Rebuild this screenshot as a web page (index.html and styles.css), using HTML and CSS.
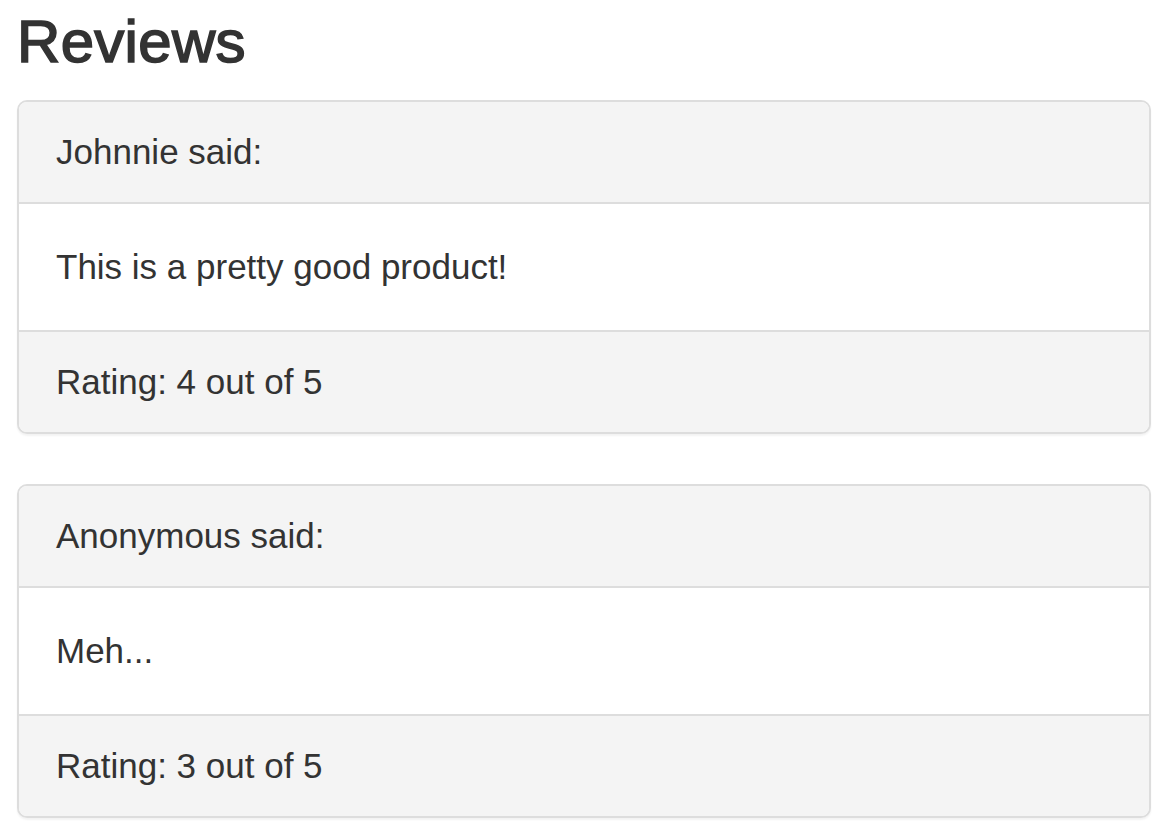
FILE: index.html
```html
<!DOCTYPE html>
<html lang="en">
<head>
<meta charset="utf-8">
<title>Reviews</title>
<link rel="stylesheet" href="styles.css">
</head>
<body>
<div class="page">
  <h3 class="title">Reviews</h3>
  <div class="panel">
    <div class="panel-heading">Johnnie said:</div>
    <div class="panel-body">This is a pretty good product!</div>
    <div class="panel-footer">Rating: 4 out of 5</div>
  </div>
  <div class="panel">
    <div class="panel-heading">Anonymous said:</div>
    <div class="panel-body">Meh...</div>
    <div class="panel-footer">Rating: 3 out of 5</div>
  </div>
</div>
</body>
</html>
```
FILE: styles.css
```css
html, body {
  margin: 0;
  padding: 0;
  background: #fff;
}
body {
  font-family: "Liberation Sans", Arial, Helvetica, sans-serif;
  font-size: 35px;
  line-height: 50px;
  color: #333;
}
.page {
  padding: 9px 17px 0 17px;
}
.title {
  font-size: 60px;
  font-weight: 400;
  -webkit-text-stroke: 1.6px #333;
  letter-spacing: 0.3px;
  line-height: 66px;
  margin: 0 0 25px 0;
  color: #333;
}
.panel {
  background: #fff;
  border: 2px solid #ddd;
  border-radius: 10px;
  box-shadow: 0 2px 2px rgba(0,0,0,0.05);
  margin-bottom: 50px;
  overflow: hidden;
}
.panel-heading {
  background: #f4f4f4;
  border-bottom: 2px solid #ddd;
  padding: 25px 37px;
}
.panel-body {
  padding: 38px 37px;
}
.panel-footer {
  background: #f4f4f4;
  border-top: 2px solid #ddd;
  padding: 25px 37px;
}
```
